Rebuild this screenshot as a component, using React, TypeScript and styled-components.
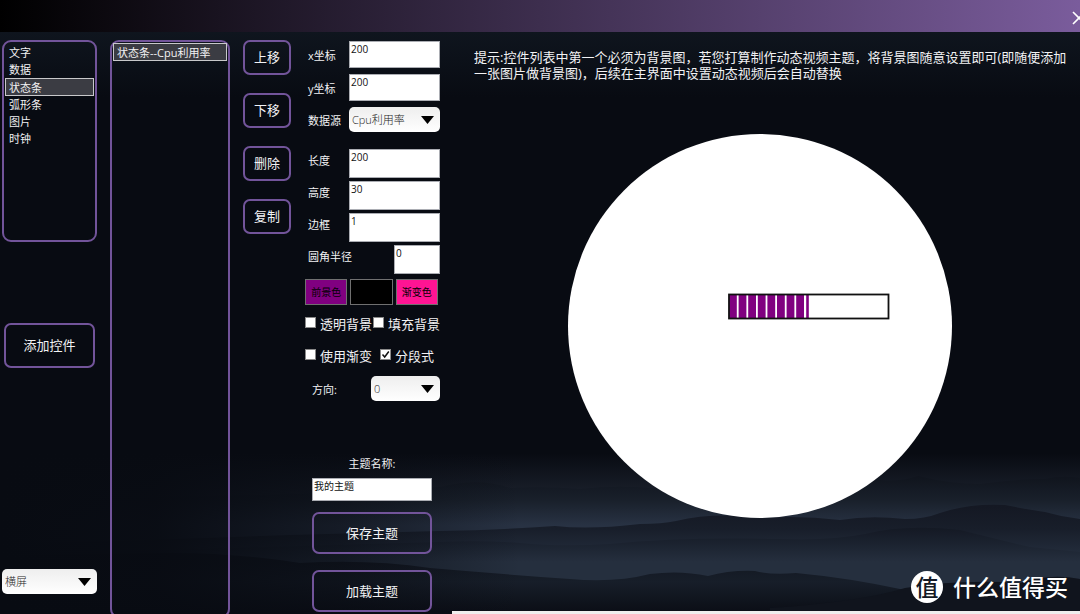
import React, { useState } from "react";
import styled, { createGlobalStyle } from "styled-components";

const GlobalStyle = createGlobalStyle`
  *, *::before, *::after { box-sizing: border-box; }
  html, body { margin: 0; padding: 0; background: #080b12; }
  body, button, input, select {
    font-family: "Open Sans", "Noto Sans CJK SC", sans-serif;
  }
  button { cursor: pointer; }
`;

const purple = "#72549a";

const Page = styled.div`
  position: relative;
  display: flex;
  flex-direction: column;
  height: 100vh;
  min-height: 614px;
  overflow: hidden;
  color: #f2f2f4;
  font-size: 11px;
`;

const TitleBar = styled.header`
  display: flex;
  justify-content: flex-end;
  align-items: center;
  height: 32px;
  flex: none;
  padding-top: 4px;
  background: linear-gradient(90deg, #000 0%, #7a5c9c 100%);
`;

const CloseButton = styled.button`
  display: flex;
  flex: none;
  margin-right: -6px;
  padding: 0;
  border: 0;
  background: none;
  color: #fff;
`;

const Workspace = styled.main`
  position: relative;
  display: flex;
  flex: 1;
  min-height: 0;
`;

const Backdrop = styled.svg`
  position: absolute;
  inset: 0;
  width: 100%;
  height: 100%;
`;

const Column = styled.div<{ $width: number; $gap?: number }>`
  position: relative;
  display: flex;
  flex-direction: column;
  flex: none;
  gap: ${(p) => p.$gap ?? 0}px;
  width: ${(p) => p.$width}px;
  padding-top: 8px;
`;

const LibraryColumn = styled(Column)`
  margin-left: 2px;
  padding-bottom: 20px;
`;

const LayerColumn = styled(Column)`
  margin: 0 13px;
`;

const FormColumn = styled(Column)`
  margin-left: 14px;
  padding-top: 9px;
`;

const ListBox = styled.ul<{ $top: number }>`
  margin: 0;
  padding: ${(p) => p.$top}px 1px;
  list-style: none;
  border: 2px solid ${purple};
  border-radius: 9px;
`;

const LibraryList = styled(ListBox)`
  height: 202px;
`;

const LayerList = styled(ListBox)`
  flex: 1;
  margin-bottom: -4px;
`;

const ListItem = styled.button<{ $active?: boolean }>`
  display: block;
  width: 100%;
  height: ${(p) => (p.$active ? 18 : 17)}px;
  padding: 0 3px;
  border: 1px solid ${(p) => (p.$active ? "#c8c8ca" : "transparent")};
  background: ${(p) => (p.$active ? "#3b3c43" : "transparent")};
  color: inherit;
  font-size: 11px;
  line-height: 15px;
  text-align: left;
  white-space: nowrap;
`;

const OutlineButton = styled.button<{ $height: number }>`
  height: ${(p) => p.$height}px;
  padding: 0 0 2px;
  border: 2px solid ${purple};
  border-radius: 7px;
  background: transparent;
  color: inherit;
  font-size: 13px;
`;

const AddButton = styled(OutlineButton)`
  margin: 81px 2px auto;
`;

const SelectFrame = styled.div<{ $width?: number }>`
  display: grid;
  align-items: center;
  width: ${(p) => (p.$width ? `${p.$width}px` : "100%")};
  height: 25px;
  border-radius: 5px;
  background: linear-gradient(#eeeeee, #ffffff);
  & > * { grid-area: 1 / 1; }
  & > svg { justify-self: end; margin-right: 6px; pointer-events: none; }
`;

const NativeSelect = styled.select`
  appearance: none;
  width: 100%;
  height: 25px;
  padding: 0 20px 0 3px;
  border: 0;
  border-radius: 5px;
  background: transparent;
  color: #1c1c1c;
  font-size: 11px;
  font-weight: 300;
`;

const FieldGroup = styled.div<{ $gap: number; $top?: number }>`
  display: flex;
  flex-direction: column;
  gap: ${(p) => p.$gap}px;
  margin-top: ${(p) => p.$top ?? 0}px;
`;

const FieldRow = styled.div<{ $indent?: number; $raised?: boolean }>`
  display: flex;
  justify-content: space-between;
  align-items: center;
  padding-left: ${(p) => p.$indent ?? 3}px;
  white-space: nowrap;
  & > label { padding-bottom: ${(p) => (p.$raised ? 8 : 0)}px; }
`;

const TextInput = styled.input<{ $width: number; $height: number }>`
  width: ${(p) => p.$width}px;
  height: ${(p) => p.$height}px;
  padding: 0 2px ${(p) => p.$height - 15}px 1px;
  border: 1px solid #abadb3;
  border-radius: 0;
  background: #fff;
  color: #111;
  font-size: 10px;
  line-height: 14px;
`;

const SwatchRow = styled.div`
  display: flex;
  gap: 3px;
  margin: 5px 2px 0 0;
`;

const Swatch = styled.button<{ $color: string }>`
  flex: 1;
  height: 26px;
  padding: 0 0 1px;
  border: 1px solid #707070;
  background: ${(p) => p.$color};
  color: #000;
  font-size: 10px;
`;

const CheckRow = styled.div<{ $gap: number; $top: number }>`
  display: flex;
  gap: ${(p) => p.$gap}px;
  margin-top: ${(p) => p.$top}px;
`;

const CheckLabel = styled.label`
  display: flex;
  align-items: flex-start;
  gap: 4px;
  font-size: 13px;
  line-height: 16px;
  white-space: nowrap;
`;

const CheckFrame = styled.span`
  display: grid;
  margin-top: 1px;
  & > * { grid-area: 1 / 1; }
  & > svg { pointer-events: none; }
`;

const CheckInput = styled.input`
  appearance: none;
  width: 11px;
  height: 11px;
  margin: 0;
  border: 1px solid #8a8a8a;
  background: #fff;
`;

const ThemePanel = styled.div`
  display: flex;
  flex-direction: column;
  width: 120px;
  margin: 55px 0 0 7px;
`;

const ThemeLabel = styled.label`
  margin-bottom: 6px;
  line-height: 16px;
  text-align: center;
`;

const ThemeActions = styled.div`
  display: flex;
  flex-direction: column;
  gap: 16px;
  margin-top: 11px;
`;

const Preview = styled.section`
  position: relative;
  display: flex;
  flex: 1;
  flex-direction: column;
  min-width: 0;
  margin-left: 12px;
`;

const Hint = styled.p`
  margin: 0;
  padding: 17px 6px 0 22px;
  font-size: 13px;
  line-height: 16px;
`;

const Stage = styled.div`
  display: flex;
  justify-content: center;
  margin-top: 53px;
  padding-right: 12px;
`;

const Dial = styled.div`
  position: relative;
  width: 384px;
  height: 384px;
  border-radius: 50%;
  background: #fff;
`;

const StatusBar = styled.svg`
  position: absolute;
  left: 160px;
  top: 159px;
`;

const BottomStrip = styled.footer`
  height: 3px;
  margin-top: auto;
  background: #f0eeee;
`;

const Watermark = styled.div`
  position: absolute;
  right: 12px;
  bottom: 11px;
  display: flex;
  align-items: center;
  gap: 10px;
  color: #fff;
  font-family: "Noto Sans CJK SC", sans-serif;
  font-size: 23px;
  font-weight: 500;
  line-height: 30px;
`;

const WatermarkText = styled.span`
  padding-bottom: 2px;
`;

const Seal = styled.span`
  display: flex;
  justify-content: center;
  align-items: center;
  flex: none;
  width: 32px;
  height: 32px;
  padding-bottom: 2px;
  border-radius: 50%;
  background: #fff;
  color: #141a25;
`;

function Mountains() {
  return (
    <Backdrop viewBox="0 32 1080 582" preserveAspectRatio="none" aria-hidden="true">
      <defs>
        <linearGradient id="sky" x1="0" y1="32" x2="0" y2="500" gradientUnits="userSpaceOnUse">
          <stop offset="0" stopColor="#0f151e" />
          <stop offset="0.14" stopColor="#080b12" />
          <stop offset="0.9" stopColor="#080b12" />
          <stop offset="1" stopColor="#1c222e" />
        </linearGradient>
        <linearGradient id="far" x1="0" y1="476" x2="0" y2="525" gradientUnits="userSpaceOnUse">
          <stop offset="0" stopColor="#10141d" />
          <stop offset="0.5" stopColor="#19202b" />
          <stop offset="1" stopColor="#283243" />
        </linearGradient>
        <linearGradient id="mid" x1="0" y1="506" x2="0" y2="552" gradientUnits="userSpaceOnUse">
          <stop offset="0" stopColor="#141823" />
          <stop offset="0.5" stopColor="#181e2a" />
          <stop offset="1" stopColor="#222b3a" />
        </linearGradient>
        <linearGradient id="low" x1="0" y1="528" x2="0" y2="562" gradientUnits="userSpaceOnUse">
          <stop offset="0" stopColor="#141924" />
          <stop offset="0.45" stopColor="#1b222f" />
          <stop offset="1" stopColor="#252f3e" />
        </linearGradient>
        <linearGradient id="near" x1="0" y1="562" x2="0" y2="612" gradientUnits="userSpaceOnUse">
          <stop offset="0" stopColor="#131822" />
          <stop offset="0.4" stopColor="#171e29" />
          <stop offset="1" stopColor="#0b0e16" />
        </linearGradient>
        <linearGradient id="shade" x1="0" y1="0" x2="520" y2="0" gradientUnits="userSpaceOnUse">
          <stop offset="0" stopColor="#080b12" />
          <stop offset="0.3" stopColor="#080b12" stopOpacity="0.95" />
          <stop offset="0.65" stopColor="#080b12" stopOpacity="0.6" />
          <stop offset="1" stopColor="#080b12" stopOpacity="0" />
        </linearGradient>
      </defs>
      <rect x="0" y="32" width="1080" height="582" fill="url(#sky)" />
      <path
        fill="url(#far)"
        d="M0 500 L300 494 L440 487 Q479 477 510 488 Q545 486 580 489 Q615 485 650 488 L800 484 L880 480 Q900 482 918 476 Q950 484 980 484 Q1015 479 1045 479 Q1062 475 1080 478 V614 H0Z"
      />
      <path
        fill="url(#mid)"
        d="M0 545 L290 535 L440 531 Q500 530 555 526 Q590 530 640 524 Q662 524 676 521 Q715 512 760 518 Q800 515 840 520 Q870 515 905 519 Q925 519 940 513 Q970 503 1005 505 Q1030 510 1045 512 Q1062 517 1080 519 V614 H0Z"
      />
      <path
        fill="url(#low)"
        d="M0 555 L300 546 L440 542 Q480 540 520 543 Q560 547 610 544 Q680 537 780 539 Q830 541 865 534 Q905 524 960 530 Q1000 540 1030 547 L1080 552 V614 H0Z"
      />
      <path
        fill="url(#near)"
        d="M0 556 L160 553 Q230 552 300 563 Q370 559 430 568 Q500 574 570 579 Q615 583 650 574 Q680 570 708 576 Q730 570 755 571 Q770 575 796 573 Q850 578 905 590 L1080 600 V614 H0Z"
      />
      <path fill="#10141d" d="M770 608 Q860 602 905 588 Q960 579 1020 583 Q1050 573 1080 579 V614 H770Z" />
      <rect x="0" y="400" width="520" height="214" fill="url(#shade)" />
    </Backdrop>
  );
}

interface DropdownProps {
  id: string;
  label?: string;
  width?: number;
  options: string[];
}

function Dropdown({ id, label, width, options }: DropdownProps) {
  return (
    <SelectFrame $width={width}>
      <NativeSelect id={id} aria-label={label} defaultValue={options[0]}>
        {options.map((o) => (
          <option key={o}>{o}</option>
        ))}
      </NativeSelect>
      <svg width="13" height="8" viewBox="0 0 13 8" aria-hidden="true">
        <path d="M0 0H13L6.500 8Z" fill="#000" />
      </svg>
    </SelectFrame>
  );
}

interface NumberFieldProps {
  id: string;
  label: string;
  value: string;
  width?: number;
  height: number;
  raised?: boolean;
}

function NumberField({ id, label, value, width = 91, height, raised }: NumberFieldProps) {
  return (
    <FieldRow $raised={raised}>
      <label htmlFor={id}>{label}</label>
      <TextInput id={id} type="text" defaultValue={value} $width={width} $height={height} />
    </FieldRow>
  );
}

function Check({ label, initial = false }: { label: string; initial?: boolean }) {
  const [on, setOn] = useState(initial);
  return (
    <CheckLabel>
      <CheckFrame>
        <CheckInput type="checkbox" checked={on} onChange={() => setOn(!on)} />
        {on && (
          <svg width="11" height="11" viewBox="0 0 11 11" aria-hidden="true">
            <path d="M2.500 5.500L4.700 8L8.800 2.500" fill="none" stroke="#111" strokeWidth="1.500" />
          </svg>
        )}
      </CheckFrame>
      {label}
    </CheckLabel>
  );
}

function SegmentedBar() {
  const segments = [0, 1, 2, 3, 4, 5, 6, 7];
  return (
    <StatusBar width="162" height="27" viewBox="0 0 162 27" role="img" aria-label="Cpu利用率">
      <rect x="1" y="1" width="160" height="25" fill="#fff" />
      {segments.map((i) => (
        <rect key={i} x={1 + i * 9.6} y="1" width="7.800" height="25" fill="#800080" />
      ))}
      <rect x="78.200" y="1" width="2.600" height="25" fill="#800080" />
      <rect x="1" y="1.500" width="159.500" height="24" fill="none" stroke="#111" strokeWidth="1.800" />
    </StatusBar>
  );
}

const libraryItems = ["文字", "数据", "状态条", "弧形条", "图片", "时钟"];
const layerActions = ["上移", "下移", "删除", "复制"];

export default function App() {
  const [selected, setSelected] = useState("状态条");

  return (
    <>
      <GlobalStyle />
      <Page>
        <TitleBar>
          <CloseButton type="button" aria-label="关闭">
            <svg width="14" height="14" viewBox="0 0 14 14" aria-hidden="true">
              <path d="M1 1L13 13M13 1L1 13" stroke="currentColor" strokeWidth="1.600" />
            </svg>
          </CloseButton>
        </TitleBar>
        <Workspace>
          <Mountains />
          <LibraryColumn $width={95}>
            <LibraryList $top={2}>
              {libraryItems.map((item) => (
                <li key={item}>
                  <ListItem type="button" $active={item === selected} onClick={() => setSelected(item)}>
                    {item}
                  </ListItem>
                </li>
              ))}
            </LibraryList>
            <AddButton type="button" $height={45}>添加控件</AddButton>
            <Dropdown id="orientation" label="屏幕方向" options={["横屏", "竖屏"]} />
          </LibraryColumn>

          <LayerColumn $width={120}>
            <LayerList $top={1}>
              <li>
                <ListItem type="button" $active>状态条--Cpu利用率</ListItem>
              </li>
            </LayerList>
          </LayerColumn>

          <Column $width={48} $gap={18}>
            {layerActions.map((a) => (
              <OutlineButton key={a} type="button" $height={35}>{a}</OutlineButton>
            ))}
          </Column>

          <FormColumn $width={135}>
            <FieldGroup $gap={6}>
              <NumberField id="x" label="x坐标" value="200" height={27} />
              <NumberField id="y" label="y坐标" value="200" height={27} />
              <FieldRow>
                <label htmlFor="source">数据源</label>
                <Dropdown id="source" width={91} options={["Cpu利用率"]} />
              </FieldRow>
            </FieldGroup>
            <FieldGroup $gap={3} $top={17}>
              <NumberField id="length" label="长度" value="200" height={29} raised />
              <NumberField id="height" label="高度" value="30" height={29} raised />
              <NumberField id="border" label="边框" value="1" height={29} raised />
              <NumberField id="radius" label="圆角半径" value="0" width={46} height={29} raised />
            </FieldGroup>
            <SwatchRow>
              <Swatch type="button" $color="#800080">前景色</Swatch>
              <Swatch type="button" $color="#000000" aria-label="背景色" />
              <Swatch type="button" $color="#ff1493">渐变色</Swatch>
            </SwatchRow>
            <CheckRow $gap={1} $top={11}>
              <Check label="透明背景" />
              <Check label="填充背景" />
            </CheckRow>
            <CheckRow $gap={8} $top={16}>
              <Check label="使用渐变" />
              <Check label="分段式" initial />
            </CheckRow>
            <FieldGroup $gap={0} $top={12}>
              <FieldRow $indent={7}>
                <label htmlFor="direction">方向:</label>
                <Dropdown id="direction" width={69} options={["0", "1"]} />
              </FieldRow>
            </FieldGroup>
            <ThemePanel>
              <ThemeLabel htmlFor="theme">主题名称:</ThemeLabel>
              <TextInput id="theme" type="text" defaultValue="我的主题" $width={120} $height={23} />
              <ThemeActions>
                <OutlineButton type="button" $height={42}>保存主题</OutlineButton>
                <OutlineButton type="button" $height={42}>加载主题</OutlineButton>
              </ThemeActions>
            </ThemePanel>
          </FormColumn>

          <Preview>
            <Hint>
              提示:控件列表中第一个必须为背景图，若您打算制作动态视频主题，将背景图随意设置即可(即随便添加一张图片做背景图)，后续在主界面中设置动态视频后会自动替换
            </Hint>
            <Stage>
              <Dial>
                <SegmentedBar />
              </Dial>
            </Stage>
            <BottomStrip />
          </Preview>
        </Workspace>
        <Watermark>
          <Seal>值</Seal>
          <WatermarkText>什么值得买</WatermarkText>
        </Watermark>
      </Page>
    </>
  );
}
